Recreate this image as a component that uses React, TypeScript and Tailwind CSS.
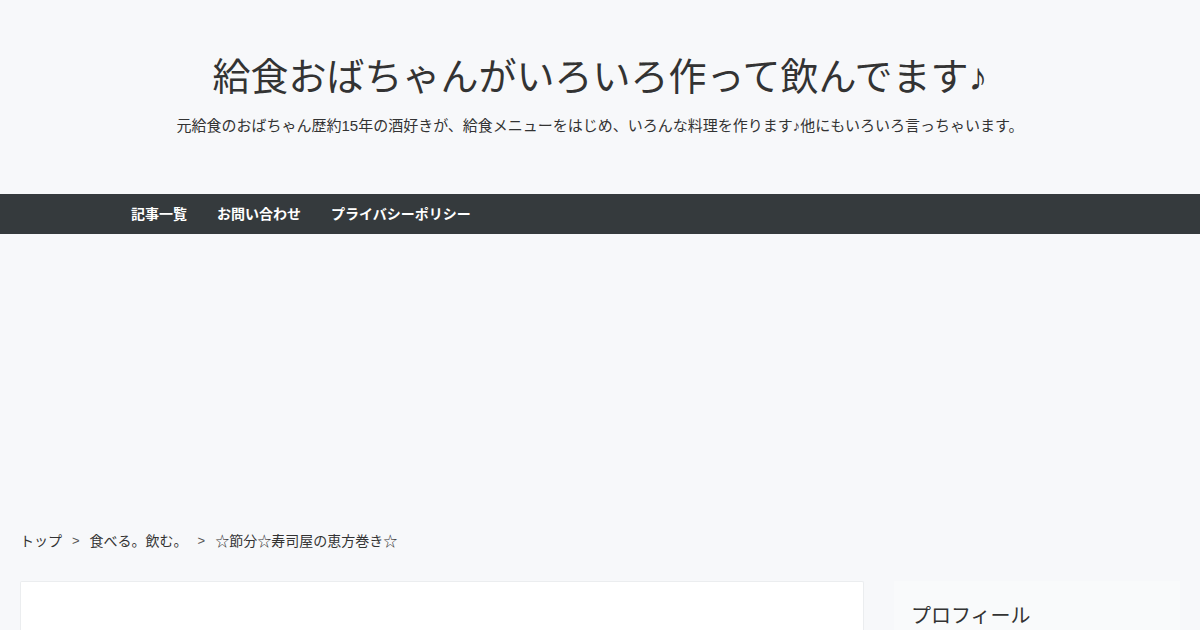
const font = "font-['Liberation_Sans','Noto_Sans_CJK_JP',sans-serif]";

const navItems = ["記事一覧", "お問い合わせ", "プライバシーポリシー"];

const crumbs = ["トップ", "食べる。飲む。", "☆節分☆寿司屋の恵方巻き☆"];

export default function App() {
  return (
    <div className={`${font} min-h-[630px] w-[1200px] overflow-hidden bg-[#f7f8fa] text-[#333]`}>
      <header className="flex h-[194px] flex-col items-center pt-[52px]">
        <h1 className="text-[38px] leading-[50px] text-[#333]">
          給食おばちゃんがいろいろ作って飲んでます♪
        </h1>
        <p className="mt-[13px] text-[15px] leading-[22px] text-[#333]">
          元給食のおばちゃん歴約15年の酒好きが、給食メニューをはじめ、いろんな料理を作ります♪他にもいろいろ言っちゃいます。
        </p>
      </header>

      <nav className="flex h-[40px] items-center bg-[#353a3d] pl-[116px]">
        {navItems.map((item) => (
          <a key={item} className="px-[15px] text-[14px] font-bold text-white">
            {item}
          </a>
        ))}
      </nav>

      {/* ad space */}
      <div className="h-[297px]" />

      <div className="flex items-center px-[20px] text-[14px] leading-[20px]">
        {crumbs.map((c, i) => (
          <span key={c} className="flex items-center">
            {i > 0 && <span className="mx-[10px] text-[13px] text-[#555]">&gt;</span>}
            <span>{c}</span>
          </span>
        ))}
      </div>

      <div className="mt-[30px] flex gap-[30px] px-[20px]">
        <main className="h-[60px] w-[844px] rounded-t-[2px] border border-b-0 border-[#ebedef] bg-white" />
        <aside className="h-[60px] w-[286px] bg-[#f9fafb] px-[17px] pt-[22px]">
          <h3 className="text-[20px] leading-[26px] text-[#333]">プロフィール</h3>
        </aside>
      </div>
    </div>
  );
}
